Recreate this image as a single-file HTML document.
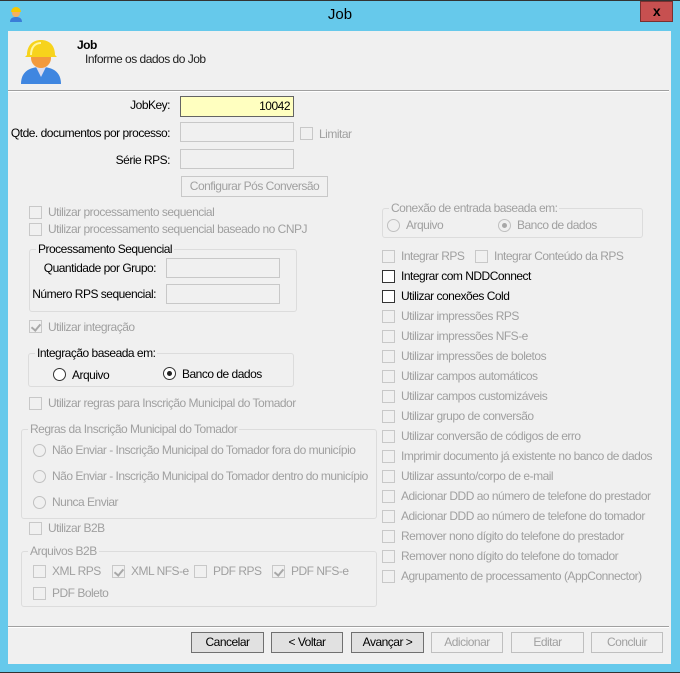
<!DOCTYPE html>
<html><head><meta charset="utf-8"><style>
*{box-sizing:border-box;margin:0;padding:0}
body{width:680px;height:673px;background:#66c9eb;position:relative;overflow:hidden;font-family:"Liberation Sans",sans-serif;font-size:12px;color:#000;letter-spacing:-0.5px}
.a{position:absolute;white-space:nowrap}
.d{color:#a0a0a0}
.t{position:absolute;white-space:nowrap;line-height:14px}
.in{position:absolute;border:1px solid #c8c8c8;background:#f0f0f0;height:20px}
.cb{position:absolute;width:13px;height:13px;border:1px solid #c8c8c8;background:#f0f0f0}
.cb.e{border-color:#333;background:#fff}
.cb.k::after{content:"";position:absolute;left:3px;top:1px;width:4px;height:7px;border:solid #a8a8a8;border-width:0 2px 2px 0;transform:rotate(40deg)}
.rb{position:absolute;width:13px;height:13px;border:1px solid #333;border-radius:50%;background:#fff}
.rb.dd{border-color:#c0c0c0;background:#f0f0f0}
.rb.s::after{content:"";position:absolute;left:3px;top:3px;width:5px;height:5px;border-radius:50%;background:#222}
.rb.dd.s::after{background:#a8a8a8}
.g{position:absolute;border:1px solid #dcdcdc;border-radius:3px}
.gl{position:absolute;top:-8px;left:6px;background:#f0f0f0;padding:0 2px;line-height:14px}
.btn{position:absolute;top:632px;height:21px;border:1px solid #adadad;background:#e1e1e1;text-align:center;line-height:19px}
.btn.p{border-color:#707070}
.btn.x{background:#f0f0f0;border-color:#bfbfbf;color:#a0a0a0}
</style></head><body>
<div class="a" style="left:0;top:0;width:680px;height:1px;background:#333"></div>
<div class="a" style="left:0;top:672px;width:680px;height:1px;background:#333"></div>
<svg class="a" style="left:8px;top:6px" width="16" height="16" viewBox="0 0 16 16"><circle cx="8" cy="7" r="4" fill="#f4b060"/><path d="M3 6a5 5 0 0 1 10 0z" fill="#f5c800"/><path d="M2 16c0-4 3-5 6-5s6 1 6 5z" fill="#3a7dd8"/></svg>
<div class="a" style="left:0;width:680px;top:6px;text-align:center;font-size:15px;color:#000;letter-spacing:0">Job</div>
<div class="a" style="left:640px;top:1px;width:33px;height:21px;background:#c75050;border:1px solid #7a3030;color:#000;font-weight:bold;font-size:14px;text-align:center;line-height:18px">x</div>
<div class="a" style="left:8px;top:31px;width:663px;height:633px;background:#f0f0f0"></div>
<svg class="a" style="left:19px;top:36px" width="44" height="50" viewBox="0 0 44 50"><path d="M2 48c0-12 8-17 20-17s20 5 20 17z" fill="#3f86e0"/><path d="M17 31l5 10 5-10z" fill="#dde"/><circle cx="22" cy="22" r="10" fill="#f39a3c"/><path d="M8 19c0-10 6-15 14-15s14 5 14 15l2 2H6z" fill="#f7d31c"/><path d="M12 19c0-8 4-12 10-12" stroke="#fff7a0" stroke-width="2" fill="none"/></svg>
<div class="a" style="left:77px;top:38px;font-weight:bold">Job</div>
<div class="a" style="left:85px;top:52px;color:#202020">Informe os dados do Job</div>
<div class="a" style="left:8px;top:90px;width:661px;height:1px;background:#a0a0a0"></div>
<div class="a" style="left:8px;top:91px;width:661px;height:1px;background:#fff"></div>

<div class="t" style="right:510px;top:98px">JobKey:</div>
<div class="in" style="left:180px;top:96px;width:114px;height:21px;background:#ffffc0;border-color:#646464;text-align:right;padding-right:3px;line-height:19px">10042</div>
<div class="t" style="right:510px;top:126px">Qtde. documentos por processo:</div>
<div class="in" style="left:180px;top:122px;width:114px"></div>
<div class="cb" style="left:300px;top:127px"></div><div class="t d" style="left:319px;top:127px">Limitar</div>
<div class="t" style="right:510px;top:153px">Série RPS:</div>
<div class="in" style="left:180px;top:149px;width:114px"></div>
<div class="a" style="left:181px;top:176px;width:147px;height:21px;border:1px solid #c8c8c8;text-align:center;line-height:19px;color:#a0a0a0">Configurar Pós Conversão</div>

<div class="cb" style="left:29px;top:206px"></div><div class="t d" style="left:48px;top:205px">Utilizar processamento sequencial</div>
<div class="cb" style="left:29px;top:223px"></div><div class="t d" style="left:48px;top:222px">Utilizar processamento sequencial baseado no CNPJ</div>

<div class="g" style="left:29px;top:249px;width:268px;height:63px"><div class="gl">Processamento Sequencial</div></div>
<div class="t" style="right:524px;top:261px">Quantidade por Grupo:</div>
<div class="in" style="left:166px;top:258px;width:114px"></div>
<div class="t" style="right:524px;top:287px">Número RPS sequencial:</div>
<div class="in" style="left:166px;top:284px;width:114px"></div>

<div class="cb k" style="left:29px;top:320px"></div><div class="t d" style="left:48px;top:320px">Utilizar integração</div>
<div class="g" style="left:28px;top:353px;width:266px;height:34px"><div class="gl">Integração baseada em:</div></div>
<div class="rb" style="left:53px;top:368px"></div><div class="t" style="left:72px;top:368px">Arquivo</div>
<div class="rb s" style="left:163px;top:367px"></div><div class="t" style="left:182px;top:367px">Banco de dados</div>

<div class="cb" style="left:29px;top:397px"></div><div class="t d" style="left:48px;top:396px">Utilizar regras para Inscrição Municipal do Tomador</div>
<div class="g" style="left:21px;top:429px;width:356px;height:90px"><div class="gl d">Regras da Inscrição Municipal do Tomador</div></div>
<div class="rb dd" style="left:33px;top:444px"></div><div class="t d" style="left:52px;top:443px">Não Enviar - Inscrição Municipal do Tomador fora do município</div>
<div class="rb dd" style="left:33px;top:470px"></div><div class="t d" style="left:52px;top:469px">Não Enviar - Inscrição Municipal do Tomador dentro do município</div>
<div class="rb dd" style="left:33px;top:496px"></div><div class="t d" style="left:52px;top:495px">Nunca Enviar</div>

<div class="cb" style="left:29px;top:522px"></div><div class="t d" style="left:48px;top:521px">Utilizar B2B</div>
<div class="g" style="left:21px;top:551px;width:356px;height:56px"><div class="gl d">Arquivos B2B</div></div>
<div class="cb" style="left:33px;top:565px"></div><div class="t d" style="left:52px;top:564px">XML RPS</div>
<div class="cb k" style="left:112px;top:565px"></div><div class="t d" style="left:131px;top:564px">XML NFS-e</div>
<div class="cb" style="left:194px;top:565px"></div><div class="t d" style="left:213px;top:564px">PDF RPS</div>
<div class="cb k" style="left:272px;top:565px"></div><div class="t d" style="left:291px;top:564px">PDF NFS-e</div>
<div class="cb" style="left:33px;top:587px"></div><div class="t d" style="left:52px;top:586px">PDF Boleto</div>

<div class="g" style="left:382px;top:208px;width:261px;height:30px"><div class="gl d">Conexão de entrada baseada em:</div></div>
<div class="rb dd" style="left:387px;top:219px"></div><div class="t d" style="left:406px;top:218px">Arquivo</div>
<div class="rb dd s" style="left:498px;top:219px"></div><div class="t d" style="left:517px;top:218px">Banco de dados</div>

<div class="cb" style="left:382px;top:250px"></div><div class="t d" style="left:401px;top:249px">Integrar RPS</div>
<div class="cb" style="left:475px;top:250px"></div><div class="t d" style="left:494px;top:249px">Integrar Conteúdo da RPS</div>
<div class="cb e" style="left:382px;top:270px"></div><div class="t" style="left:401px;top:269px">Integrar com NDDConnect</div>
<div class="cb e" style="left:382px;top:290px"></div><div class="t" style="left:401px;top:289px">Utilizar conexões Cold</div>
<div class="cb" style="left:382px;top:310px"></div><div class="t d" style="left:401px;top:309px">Utilizar impressões RPS</div>
<div class="cb" style="left:382px;top:330px"></div><div class="t d" style="left:401px;top:329px">Utilizar impressões NFS-e</div>
<div class="cb" style="left:382px;top:350px"></div><div class="t d" style="left:401px;top:349px">Utilizar impressões de boletos</div>
<div class="cb" style="left:382px;top:370px"></div><div class="t d" style="left:401px;top:369px">Utilizar campos automáticos</div>
<div class="cb" style="left:382px;top:390px"></div><div class="t d" style="left:401px;top:389px">Utilizar campos customizáveis</div>
<div class="cb" style="left:382px;top:410px"></div><div class="t d" style="left:401px;top:409px">Utilizar grupo de conversão</div>
<div class="cb" style="left:382px;top:430px"></div><div class="t d" style="left:401px;top:429px">Utilizar conversão de códigos de erro</div>
<div class="cb" style="left:382px;top:450px"></div><div class="t d" style="left:401px;top:449px">Imprimir documento já existente no banco de dados</div>
<div class="cb" style="left:382px;top:470px"></div><div class="t d" style="left:401px;top:469px">Utilizar assunto/corpo de e-mail</div>
<div class="cb" style="left:382px;top:490px"></div><div class="t d" style="left:401px;top:489px">Adicionar DDD ao número de telefone do prestador</div>
<div class="cb" style="left:382px;top:510px"></div><div class="t d" style="left:401px;top:509px">Adicionar DDD ao número de telefone do tomador</div>
<div class="cb" style="left:382px;top:530px"></div><div class="t d" style="left:401px;top:529px">Remover nono dígito do telefone do prestador</div>
<div class="cb" style="left:382px;top:550px"></div><div class="t d" style="left:401px;top:549px">Remover nono dígito do telefone do tomador</div>
<div class="cb" style="left:382px;top:570px"></div><div class="t d" style="left:401px;top:569px">Agrupamento de processamento (AppConnector)</div>

<div class="a" style="left:8px;top:626px;width:661px;height:1px;background:#a0a0a0"></div>
<div class="a" style="left:8px;top:627px;width:661px;height:1px;background:#fff"></div>
<div class="btn p" style="left:191px;width:73px">Cancelar</div>
<div class="btn p" style="left:271px;width:72px">&lt; Voltar</div>
<div class="btn p" style="left:351px;width:73px">Avançar &gt;</div>
<div class="btn x" style="left:431px;width:72px">Adicionar</div>
<div class="btn x" style="left:511px;width:73px">Editar</div>
<div class="btn x" style="left:591px;width:72px">Concluir</div>
</body></html>
